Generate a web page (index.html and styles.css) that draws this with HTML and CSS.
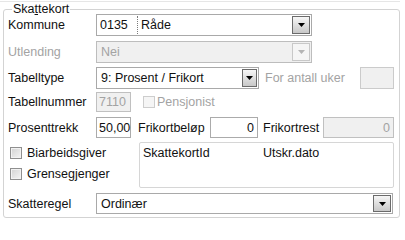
FILE: index.html
```html
<!DOCTYPE html>
<html lang="no">
<head>
<meta charset="utf-8">
<title>Skattekort</title>
<link rel="stylesheet" href="styles.css">
</head>
<body>
<div class="topline"></div>
<div class="group">
  <div class="group-title">Ska<u>t</u>tekort</div>
  <div class="form">
    <div class="row r1">
      <span class="lbl">Kommune</span>
      <div class="combo w216">
        <span class="code">0135</span>
        <span class="val">Råde</span>
        <span class="btn"><svg width="7" height="4" viewBox="0 0 7 4"><polygon points="0,0 7,0 3.5,4" fill="#000"/></svg></span>
      </div>
    </div>
    <div class="row r2">
      <span class="lbl dis">Utlending</span>
      <div class="combo w216 combo-dis">
        <span class="text">Nei</span>
        <span class="btn btn-dis"><svg width="7" height="4" viewBox="0 0 7 4"><polygon points="0,0 7,0 3.5,4" fill="#b4b4b4"/></svg></span>
      </div>
    </div>
    <div class="row r3">
      <span class="lbl">Tabelltype</span>
      <div class="combo w163">
        <span class="text">9: Prosent / Frikort</span>
        <span class="btn btn-narrow"><svg width="7" height="4" viewBox="0 0 7 4"><polygon points="0,0 7,0 3.5,4" fill="#000"/></svg></span>
      </div>
      <span class="dis after-combo">For antall uker</span>
      <div class="box box-dis box-light w34 push"></div>
    </div>
    <div class="row r4">
      <span class="lbl">Tabellnummer</span>
      <div class="box box-dis box-tight w35">7110</div>
      <span class="cb cb-dis pens-cb"></span>
      <span class="dis pens-lbl">Pensjonist</span>
    </div>
    <div class="row r5">
      <span class="lbl">Prosenttrekk</span>
      <div class="box box-tight w35">50,00</div>
      <span class="mid-lbl">Frikortbeløp</span>
      <div class="box box-right w48">0</div>
      <span class="rest-lbl">Frikortrest</span>
      <div class="box box-dis box-right w71 push">0</div>
    </div>
    <div class="row r6">
      <div class="checks">
        <div class="check"><span class="cb"></span><span>Biarbeidsgiver</span></div>
        <div class="check"><span class="cb"></span><span>Grensegjenger</span></div>
      </div>
      <div class="list">
        <span class="col1">SkattekortId</span>
        <span>Utskr.dato</span>
      </div>
    </div>
    <div class="row r7">
      <span class="lbl">Skatteregel</span>
      <div class="combo w297">
        <span class="text">Ordinær</span>
        <span class="btn"><svg width="7" height="4" viewBox="0 0 7 4"><polygon points="0,0 7,0 3.5,4" fill="#000"/></svg></span>
      </div>
    </div>
  </div>
</div>
</body>
</html>
```

FILE: styles.css
```css
* { box-sizing: border-box; }

body {
  margin: 0;
  width: 405px;
  height: 222px;
  overflow: hidden;
  background: #fff;
  font-family: "Liberation Sans", Arial, sans-serif;
  font-size: 12.5px;
  color: #111;
}

.topline {
  height: 1px;
  margin: 1px 5px 0 0;
  background: #e6e6e6;
}

.group {
  position: relative;
  margin: 7px 5px 0 3px;
  border: 1px solid #d3d3d3;
  border-radius: 3px;
  padding: 4px 5px 3px 4px;
}

.group-title {
  position: absolute;
  top: -8px;
  left: 8px;
  padding: 0 1px;
  line-height: 14px;
  background: #fff;
}

.group-title u { text-decoration-thickness: 1px; text-underline-offset: 1px; }

.form {
  display: flex;
  flex-direction: column;
}

.row {
  display: flex;
  align-items: center;
  white-space: nowrap;
}

.r1 { height: 22px; }
.r2 { height: 22px; margin-top: 5px; }
.r3 { height: 22px; margin-top: 4px; }
.r4 { height: 20px; margin-top: 3px; }
.r5 { height: 21px; margin-top: 5px; }
.r6 { height: 46px; margin-top: 4px; align-items: stretch; }
.r7 { height: 21px; margin-top: 5px; }

.lbl { width: 88px; flex: none; }

.dis { color: #a3a3a3; }

.w216 { width: 216px; }
.w163 { width: 163px; }
.w297 { width: 297px; }
.w34 { width: 34px; }
.w35 { width: 35px; }
.w48 { width: 48px; }
.w71 { width: 71px; }

.push { margin-left: auto; }

.combo {
  flex: none;
  display: flex;
  align-items: center;
  height: 100%;
  border: 1px solid #a9a9a9;
  background: #fff;
  padding: 1px;
}

.combo-dis {
  background: #f0f0f0;
  border-color: #bdbdbd;
  color: #a3a3a3;
}

.combo .text {
  flex: 1;
  padding-left: 3px;
}

.combo .code {
  flex: none;
  width: 40px;
  height: 100%;
  display: flex;
  align-items: center;
  padding-left: 2px;
  border-right: 1px dotted #7a7a7a;
}

.combo .val {
  flex: 1;
  padding-left: 3px;
}

.btn {
  flex: none;
  width: 18px;
  height: 100%;
  display: flex;
  align-items: center;
  justify-content: center;
  border: 1px solid #6b6b6b;
  background: linear-gradient(#f6f6f6, #c8c8c8);
}

.btn-narrow { width: 15px; }

.btn-dis {
  border-color: #c8c8c8;
  background: #f5f5f5;
}

.box {
  flex: none;
  height: 100%;
  display: flex;
  align-items: center;
  padding: 0 3px;
  border: 1px solid #ababab;
  background: #fff;
}

.box-tight { padding: 0 2px; }

.box-right { justify-content: flex-end; }

.box-dis {
  background: #f0f0f0;
  border-color: #c0c0c0;
  color: #a3a3a3;
}

.box-light { border-color: #cbcbcb; }

.after-combo { margin-left: 6px; }

.mid-lbl { width: 72px; flex: none; margin-left: 7px; }

.rest-lbl { margin-left: 5px; }

.cb {
  flex: none;
  width: 12px;
  height: 12px;
  border: 1px solid #8f8f8f;
  background: linear-gradient(135deg, #d2d2d2, #f4f4f4);
  box-shadow: inset 0 0 0 1px #f2f2f2;
}

.cb-dis {
  border-color: #cdcdcd;
  background: #f5f5f5;
  box-shadow: none;
}

.pens-cb { margin-left: 12px; }
.pens-lbl { margin-left: 2px; }

.checks {
  flex: none;
  width: 131px;
  display: flex;
  flex-direction: column;
}

.check {
  height: 21px;
  display: flex;
  align-items: center;
  gap: 5px;
  padding-left: 2px;
}

.list {
  flex: 1;
  display: flex;
  align-items: flex-start;
  border: 1px solid #d6d6d6;
  border-radius: 2px;
  padding: 3px 0 0 3px;
  line-height: 15px;
}

.col1 { width: 120px; flex: none; }
```
